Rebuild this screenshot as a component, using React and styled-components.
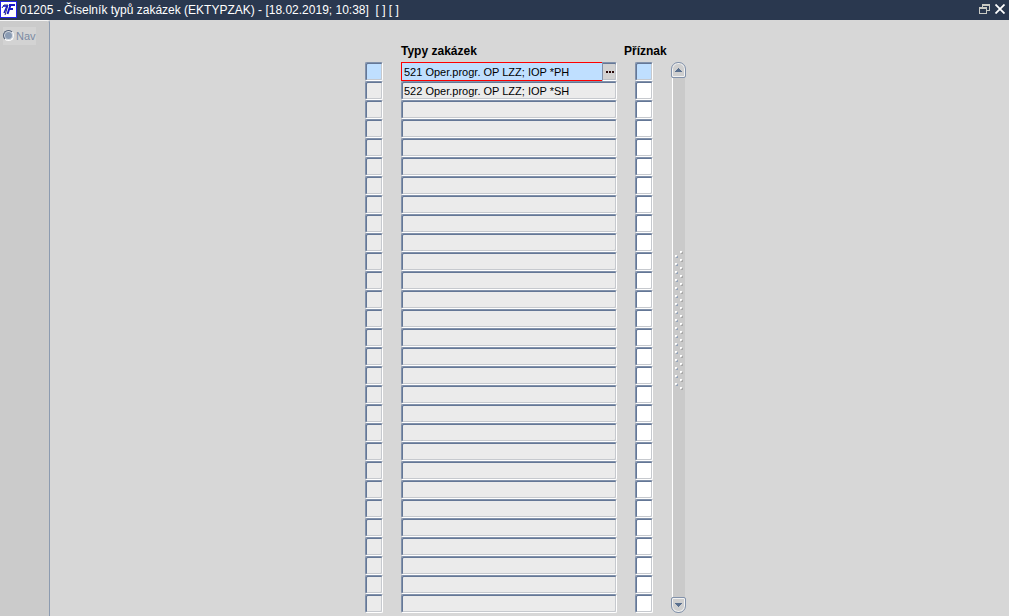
import React, { useState } from "react";
import styled, { createGlobalStyle } from "styled-components";

const GlobalStyle = createGlobalStyle`
  * {
    box-sizing: border-box;
  }
  body {
    margin: 0;
    overflow: hidden;
    background: #d7d7d7;
    font-family: "Liberation Sans", Arial, sans-serif;
    font-size: 11px;
    color: #000;
  }
  button, input {
    font: inherit;
    color: inherit;
  }
`;

const Page = styled.div`
  min-height: 100vh;
  display: flex;
  flex-direction: column;
`;

const TitleBar = styled.header`
  display: flex;
  align-items: center;
  height: 20px;
  padding-right: 4px;
  background: #2a384f;
  color: #fff;
`;

const Logo = styled.svg`
  width: 17px;
  height: 17px;
  flex: none;
  margin-right: 3px;
  margin-bottom: 2px;
`;

const Title = styled.h1`
  flex: 1;
  margin: 0;
  font-size: 12px;
  line-height: 20px;
  font-weight: normal;
  white-space: pre;
`;

const WindowButton = styled.button`
  display: flex;
  padding: 0 0 2px;
  margin-left: 5px;
  border: none;
  background: none;
`;

const Body = styled.div`
  flex: 1;
  display: flex;
`;

const Sidebar = styled.nav`
  width: 50px;
  padding: 6px 0 0 3px;
  background: #cbcbcb;
  border-top: 1px solid #f4f4f4;
  border-right: 1px solid #8c9bb0;
  border-top-right-radius: 3px;
`;

const NavOption = styled.label`
  display: flex;
  align-items: center;
  gap: 2px;
  width: 33px;
  height: 18px;
  background: #d3d3d3;
  color: #7b8ba3;
`;

const Radio = styled.input`
  appearance: none;
  flex: none;
  width: 11px;
  height: 11px;
  margin: 0 0 2px;
  border: 1px solid;
  border-color: #56637a #fff #fff #56637a;
  border-radius: 50%;
  background: #8b9cb4;
  box-shadow: inset 0 0 0 1px #d9dde3;
`;

const Main = styled.main`
  flex: 1;
  display: flex;
  justify-content: center;
  align-items: flex-start;
  padding: 20px 8px 0 0;
`;

const Block = styled.div`
  display: flex;
`;

const Table = styled.table`
  border-collapse: collapse;
  table-layout: fixed;
  width: 306px;

  th {
    height: 22px;
    padding: 0;
    font-size: 12px;
    line-height: 14px;
    text-align: left;
    white-space: nowrap;
  }
  td {
    height: 19px;
    padding: 0;
  }
`;

const Column = styled.col`
  width: ${({ $width }) => $width}px;
`;

const Cell = styled.input`
  display: block;
  width: 18px;
  height: 19px;
  padding: 0 1px;
  outline: none;
  border: 1px solid;
  border-color: #8292ab #fff #fff #8292ab;
  border-radius: 2px;
  background: ${({ $active, $white }) =>
    $active ? "#bfdfff" : $white ? "#fff" : "#ebebeb"};
  box-shadow: inset 1px 1px 0 #647796, inset -1px -1px 0 #c6c9ce;
`;

const MarkCell = styled(Cell)`
  margin-left: 11px;
`;

const TextCell = styled(Cell)`
  width: 216px;
  padding: 1px 2px 0;
`;

const ActiveField = styled.div`
  display: flex;
  width: 216px;
`;

const ActiveInput = styled(TextCell)`
  flex: 1;
  min-width: 0;
  border-color: #f00;
  border-right: none;
  border-radius: 0;
  box-shadow: none;
`;

const ListButton = styled.button`
  display: flex;
  align-items: center;
  justify-content: center;
  width: 15px;
  height: 19px;
  padding: 0;
  border: 1px solid;
  border-color: #8292ab #fff #fff #8292ab;
  border-radius: 0 2px 2px 0;
  background: #d2d2d2;
  box-shadow: inset 0 1px 0 #647796, inset -1px -1px 0 #bcc1c9;
`;

const Scrollbar = styled.div`
  display: flex;
  flex-direction: column;
  align-items: center;
  width: 15px;
  padding-top: 22px;
`;

const ScrollButton = styled.button`
  display: flex;
  align-items: center;
  justify-content: center;
  width: 15px;
  height: 16px;
  padding: 0;
  border: 1px solid #8292ab;
  border-radius: ${({ $down }) => ($down ? "2px 2px 7px 7px" : "7px 7px 2px 2px")};
  background: #cfcfcf;
  box-shadow: inset 0 0 0 1px #f2f2f2;
`;

const Track = styled.div`
  flex: 1;
  display: flex;
  align-items: center;
  justify-content: center;
  width: 13px;
  padding-bottom: 34px;
  border-left: 1px solid #fff;
  background: #cacaca;
`;

const ROW_COUNT = 29;

const records = ["521 Oper.progr. OP LZZ; IOP *PH", "522 Oper.progr. OP LZZ; IOP *SH"];

function Grip() {
  const dots = Array.from({ length: 35 }, (_, i) => ({
    x: i % 2 === 0 ? 5 : 0,
    y: i * 4,
  }));
  return (
    <svg width="8" height="139" shapeRendering="crispEdges" aria-hidden="true">
      {dots.map(({ x, y }) => (
        <g key={y}>
          <rect x={x + 1} y={y + 1} width="2" height="2" fill={x ? "#a9a9a9" : "#96a5ba"} />
          <rect x={x} y={y} width="2" height="2" fill="#fff" />
          <rect x={x + 1} y={y + 1} width="1" height="1" fill="#e4e4e4" />
        </g>
      ))}
    </svg>
  );
}

function Arrow({ down }) {
  return (
    <svg width="7" height="4" shapeRendering="crispEdges" aria-hidden="true">
      <path
        d={
          down
            ? "M0 0H7V1H6V2H5V3H4V4H3V3H2V2H1V1H0Z"
            : "M0 4H7V3H6V2H5V1H4V0H3V1H2V2H1V3H0Z"
        }
        fill="#5a708f"
      />
    </svg>
  );
}

function App() {
  const [values, setValues] = useState(
    Array.from({ length: ROW_COUNT }, (_, i) => records[i] || "")
  );

  const change = (row) => (e) =>
    setValues(values.map((value, i) => (i === row ? e.target.value : value)));

  return (
    <>
      <GlobalStyle />
      <Page>
        <TitleBar>
          <Logo viewBox="0 0 17 17" aria-hidden="true">
            <rect x="0.5" y="0.5" width="16" height="16" fill="#fff" stroke="#2222e8" />
            <path d="M2 7L4 4H8L5 14" stroke="#26306e" fill="none" />
            <path d="M3 5H8M7 5L4 12" stroke="#1515c8" strokeWidth="1.5" fill="none" />
            <path d="M9 4H15M10.5 4L7.5 13M9 8H13" stroke="#1515c8" strokeWidth="2" fill="none" />
          </Logo>
          <Title>{"01205 - Číselník typů zakázek (EKTYPZAK) - [18.02.2019; 10:38]  [ ] [ ]"}</Title>
          <WindowButton type="button" aria-label="Restore">
            <svg width="11" height="10" viewBox="0 0 11 10" fill="none" shapeRendering="crispEdges">
              <path d="M3.5 3V0.5H10.5V6.5H7M3 1.5H10" stroke="#c9cac4" />
              <path d="M0.5 3.5H7.5V9.5H0.5ZM0 4.5H8" stroke="#c9cac4" />
            </svg>
          </WindowButton>
          <WindowButton type="button" aria-label="Close">
            <svg width="10" height="10" viewBox="0 0 10 10">
              <path d="M0.5 0.5L9.5 9.5M9.5 0.5L0.5 9.5" stroke="#fff" strokeWidth="1.8" />
            </svg>
          </WindowButton>
        </TitleBar>
        <Body>
          <Sidebar>
            <NavOption>
              <Radio type="radio" name="nav" disabled />
              Nav
            </NavOption>
          </Sidebar>
          <Main>
            <Block>
              <Table>
                <colgroup>
                  <Column $width={36} />
                  <Column $width={223} />
                  <Column $width={47} />
                </colgroup>
                <thead>
                  <tr>
                    <th />
                    <th scope="col">Typy zakázek</th>
                    <th scope="col">Příznak</th>
                  </tr>
                </thead>
                <tbody>
                  {values.map((value, i) => (
                    <tr key={i}>
                      <td>
                        <Cell $active={i === 0} readOnly aria-label={`Řádek ${i + 1}`} />
                      </td>
                      <td>
                        {i === 0 ? (
                          <ActiveField>
                            <ActiveInput $active value={value} onChange={change(i)} aria-label="Typy zakázek" />
                            <ListButton type="button" aria-label="Seznam hodnot">
                              <svg width="8" height="2" shapeRendering="crispEdges">
                                <path d="M0 1H2M3 1H5M6 1H8" stroke="#2b0a0a" strokeWidth="2" />
                              </svg>
                            </ListButton>
                          </ActiveField>
                        ) : (
                          <TextCell value={value} onChange={change(i)} aria-label="Typy zakázek" />
                        )}
                      </td>
                      <td>
                        <MarkCell $active={i === 0} $white aria-label="Příznak" />
                      </td>
                    </tr>
                  ))}
                </tbody>
              </Table>
              <Scrollbar>
                <ScrollButton type="button" aria-label="Nahoru">
                  <Arrow />
                </ScrollButton>
                <Track>
                  <Grip />
                </Track>
                <ScrollButton type="button" $down aria-label="Dolů">
                  <Arrow down />
                </ScrollButton>
              </Scrollbar>
            </Block>
          </Main>
        </Body>
      </Page>
    </>
  );
}

export default App;
